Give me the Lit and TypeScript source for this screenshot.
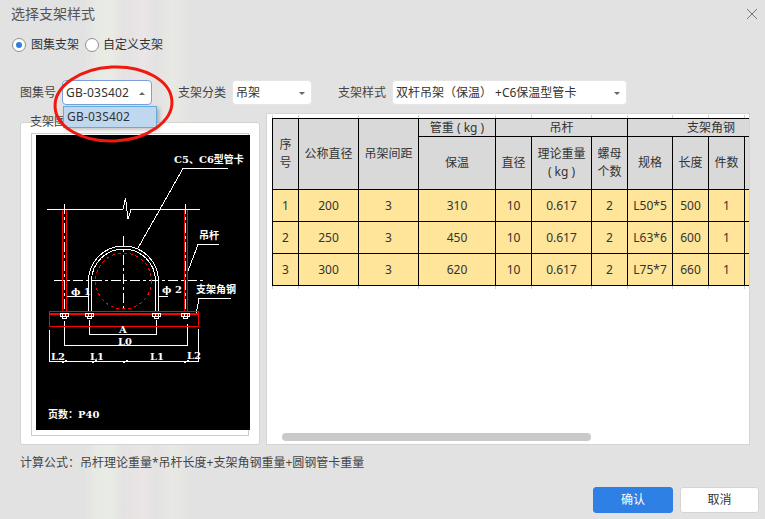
import { LitElement, css, html, svg } from 'lit';
import { customElement } from 'lit/decorators.js';

interface Row {
  no: number;
  dn: number;
  span: number;
  weight: number;
  rod: number;
  theory: string;
  nuts: number;
  spec: string;
  len: number;
  count: number;
}

const ROWS: Row[] = [
  { no: 1, dn: 200, span: 3, weight: 310, rod: 10, theory: '0.617', nuts: 2, spec: 'L50*5', len: 500, count: 1 },
  { no: 2, dn: 250, span: 3, weight: 450, rod: 10, theory: '0.617', nuts: 2, spec: 'L63*6', len: 600, count: 1 },
  { no: 3, dn: 300, span: 3, weight: 620, rod: 10, theory: '0.617', nuts: 2, spec: 'L75*7', len: 660, count: 1 },
];

const COLS = [26, 60, 60, 77, 36, 60, 36, 45, 36, 36, 50];

// bolts sit on the plate, x in page coordinates because the viewBox is aligned to the page
const bolt = (x: number) => svg`
  <path d="M${x - 4} 312.500h8v3h-8zM${x - 2} 315.500h4v2h-4zM${x - 1.5} 312.500v3M${x + 1.5} 312.500v3" fill="none" stroke="#fff" stroke-width="1" />
`;

@customElement('app-root')
export class AppRoot extends LitElement {
  static override styles = css`
    :host {
      display: flex;
      flex-direction: column;
      position: relative;
      width: 765px;
      height: 519px;
      overflow: hidden;
      box-sizing: border-box;
      padding: 0 6px 6px 20px;
      color: #333;
      font: 12px/1.3 'Noto Sans', 'Noto Sans CJK SC', sans-serif;
      background: linear-gradient(
        90deg,
        #e2e2e2 0,
        #e2e2e2 84px,
        #e8ebe5 98px,
        #e9ebe4 112px,
        #e4e2e2 124px,
        #ebe5e6 144px,
        #e3e2e2 156px,
        #e8e8e4 172px,
        #e2e2e2 192px
      );
    }
    .title {
      margin-left: -9px;
      height: 28px;
      display: flex;
      align-items: center;
      justify-content: space-between;
      font-size: 14px;
      color: #555;
      padding-right: 1px;
    }
    .close {
      width: 12px;
      height: 12px;
      display: block;
    }
    .radios {
      margin: 8px 0 0 -8px;
      height: 18px;
      display: flex;
      align-items: center;
    }
    .radio {
      display: flex;
      align-items: center;
      gap: 5px;
      margin-right: 6px;
    }
    .radio + .radio {
      gap: 4px;
    }
    .dot {
      width: 12px;
      height: 12px;
      border: 1px solid #8e8e8e;
      border-radius: 50%;
      background: #fff;
      display: flex;
      align-items: center;
      justify-content: center;
    }
    .dot.on i {
      width: 6px;
      height: 6px;
      border-radius: 50%;
      background: #2f7fe0;
    }
    .filters {
      margin-top: 26px;
      height: 25px;
      display: flex;
      align-items: center;
      position: relative;
    }
    .filters label {
      margin-right: 6px;
      color: #444;
    }
    .select {
      box-sizing: border-box;
      height: 25px;
      display: flex;
      align-items: center;
      justify-content: space-between;
      padding: 1px 6px 0 3px;
      background: #fff;
      border: 1px solid #e6e6e6;
      border-radius: 4px;
      white-space: nowrap;
    }
    .select.focus {
      border-color: #7b9fdc;
      padding-left: 3px;
      letter-spacing: 0.2px;
    }
    .arrow {
      width: 0;
      height: 0;
      border-left: 3px solid transparent;
      border-right: 3px solid transparent;
      border-top: 3px solid #666;
    }
    .arrow.up {
      border-top: 0;
      border-bottom: 3px solid #666;
    }
    .atlas {
      width: 90px;
      margin-right: 26px;
    }
    .kind {
      width: 80px;
      margin-right: 26px;
    }
    .style {
      width: 235px;
    }
    .plus {
      margin-left: 3px;
    }
    .menu {
      position: absolute;
      left: 43px;
      top: 26px;
      width: 94px;
      height: 22px;
      box-sizing: border-box;
      padding-left: 3px;
      display: flex;
      align-items: center;
      letter-spacing: 0.2px;
      background: #bfd8ef;
      border: 1px solid #62add9;
      box-shadow: 2px 2px 4px rgba(0, 0, 0, 0.25);
      z-index: 2;
    }
    .content {
      margin-top: 8px;
      display: flex;
      gap: 6px;
      height: 332px;
      padding-right: 9px;
    }
    .drawing {
      position: relative;
      box-sizing: border-box;
      margin-top: 9px;
      width: 240px;
      height: 323px;
      padding: 10px 10px 10px;
      background: #fff;
      border: 1px solid #d4d4d4;
      border-radius: 3px;
    }
    .legend {
      position: absolute;
      left: 9px;
      top: -9px;
      color: #444;
    }
    .frame {
      box-sizing: border-box;
      height: 303px;
      border: 1px solid #ccc;
      padding: 1px 0 5px 4px;
      background: #fff;
    }
    .frame svg {
      display: block;
      width: 214px;
      height: 295px;
      background: #000;
    }
    .frame text {
      fill: #fff;
      font: bold 10px 'DejaVu Serif', 'Noto Sans CJK SC', serif;
    }
    .grid {
      position: relative;
      flex: 1;
      overflow: hidden;
      background: #fff;
      border: 1px solid #d4d4d4;
      padding: 4px 0 0 5px;
      min-width: 0;
    }
    .ticks {
      display: flex;
      height: 0;
    }
    .ticks.top {
      margin-top: -3px;
      height: 3px;
    }
    .ticks.bottom {
      height: 3px;
    }
    .ticks span {
      flex: none;
      box-sizing: border-box;
      border-left: 1px solid #d0d0d0;
    }
    table {
      border-collapse: collapse;
      table-layout: fixed;
      width: 482px;
      color: #333;
    }
    th,
    td {
      border: 1px solid #000;
      padding: 0;
      text-align: center;
      font-weight: 400;
      line-height: 18px;
    }
    th {
      background: #d9d9d9;
    }
    tr.head1 th {
      height: 17px;
    }
    tr.head1 th.short {
      line-height: 16px;
    }
    tr.head2 th {
      height: 52px;
    }
    td {
      height: 31px;
      background: #fee599;
    }
    .scroll {
      position: absolute;
      left: 15px;
      bottom: 3px;
      width: 309px;
      height: 8px;
      border-radius: 4px;
      background: #c9c9c9;
    }
    .formula {
      margin-top: 10px;
      height: 17px;
      color: #444;
    }
    .actions {
      margin-top: auto;
      display: flex;
      justify-content: flex-end;
      gap: 7px;
    }
    .btn {
      box-sizing: border-box;
      width: 79px;
      height: 26px;
      display: flex;
      align-items: center;
      justify-content: center;
      border-radius: 3px;
      background: #fff;
      border: 1px solid #d4d4d4;
    }
    .btn.primary {
      width: 80px;
      background: #2f80e4;
      border-color: #2f80e4;
      color: #fff;
    }
    .ring {
      position: absolute;
      left: 0;
      top: 0;
      width: 765px;
      height: 519px;
      pointer-events: none;
      z-index: 3;
    }
  `;

  private drawing() {
    return html`<svg viewBox="35 134 214 295" shape-rendering="crispEdges">
      <g fill="none" stroke="#fff" stroke-width="1">
        <path d="M182 167.500H227M182 167.500L137 247" />
        <path d="M46 208.500H122L124.500 197L127 218L130 208.500H199" />
        <path d="M87.500 310V280A35 35 0 0 1 157.500 280V310M90.500 310V280A32 32 0 0 1 154.500 280V310" />
        <path d="M122.500 235V310M53 279.500H203M63.500 203V310M184.500 203V310" stroke-dasharray="10 3 3 3" />
        <path d="M197 243.500H218M197 243.500L187 270" />
        <path d="M65 295.500H88M157 295.500H167M198 297.500H230M198 297.500L195 313" />
        <path d="M88.500 319V333.500H155.500V319M63.500 320V344.500H186.500V323M48.500 329V360.500H198M197.500 328V360" />
        <path d="M61 362L66 359M91 362L96 359M122 362L127 359M183 362L188 359" />
      </g>
      <g fill="none" stroke="#ff0000" stroke-width="1">
        <path d="M61.500 209V310M65.500 209V310M183.500 209V310M186.500 209V310" />
        <path d="M48.500 310.500H197.500V325.500H48.500Z" />
        <path d="M48.500 313H197.500" stroke-width="2" />
        <circle cx="122.500" cy="280" r="28" stroke-dasharray="3 3" />
      </g>
      ${[63, 88.5, 155.5, 184.5].map((x) => bolt(x))}
      <text x="173" y="162">C5、C6型管卡</text>
      <text x="198" y="238">吊杆</text>
      <text x="70" y="294">ϕ 1</text>
      <text x="161" y="292">ϕ 2</text>
      <text x="195" y="292">支架角钢</text>
      <text x="118" y="332">A</text>
      <text x="117" y="344">L0</text>
      <text x="50" y="359">L2</text>
      <text x="89" y="359">L1</text>
      <text x="149" y="359">L1</text>
      <text x="186" y="358">L2</text>
      <text x="47" y="417">页数：P40</text>
    </svg>`;
  }

  private ticks(cls: string) {
    return html`<div class="ticks ${cls}">
      ${COLS.map((w) => html`<span style="width:${w}px"></span>`)}
    </div>`;
  }

  override render() {
    return html`
      <div class="title">
        <span>选择支架样式</span>
        <svg class="close" viewBox="0 0 12 12">
          <path d="M1 1L11 11M11 1L1 11" stroke="#777" fill="none" />
        </svg>
      </div>
      <div class="radios">
        <span class="radio"><span class="dot on"><i></i></span>图集支架</span>
        <span class="radio"><span class="dot"></span>自定义支架</span>
      </div>
      <div class="filters">
        <label>图集号</label>
        <div class="select focus atlas">GB-03S402<span class="arrow up"></span></div>
        <div class="menu">GB-03S402</div>
        <label>支架分类</label>
        <div class="select kind">吊架<span class="arrow"></span></div>
        <label>支架样式</label>
        <div class="select style">
          <span>双杆吊架（保温）<span class="plus">+C6保温型管卡</span></span><span class="arrow"></span>
        </div>
      </div>
      <div class="content">
        <div class="drawing">
          <span class="legend">支架图</span>
          <div class="frame">${this.drawing()}</div>
        </div>
        <div class="grid">
          ${this.ticks('top')}
          <table>
            <colgroup>${COLS.map((w) => html`<col style="width:${w}px" />`)}</colgroup>
            <thead>
              <tr class="head1">
                <th rowspan="2">序<br />号</th>
                <th rowspan="2">公称直径</th>
                <th rowspan="2">吊架间距</th>
                <th class="short">管重 ( kg )</th>
                <th class="short" colspan="3">吊杆</th>
                <th class="short" colspan="4">支架角钢</th>
              </tr>
              <tr class="head2">
                <th>保温</th>
                <th>直径</th>
                <th>理论重量<br />( kg )</th>
                <th>螺母<br />个数</th>
                <th>规格</th>
                <th>长度</th>
                <th>件数</th>
                <th></th>
              </tr>
            </thead>
            <tbody>
              ${ROWS.map(
                (r) => html`<tr>
                  <td>${r.no}</td>
                  <td>${r.dn}</td>
                  <td>${r.span}</td>
                  <td>${r.weight}</td>
                  <td>${r.rod}</td>
                  <td>${r.theory}</td>
                  <td>${r.nuts}</td>
                  <td>${r.spec}</td>
                  <td>${r.len}</td>
                  <td>${r.count}</td>
                  <td></td>
                </tr>`
              )}
            </tbody>
          </table>
          ${this.ticks('bottom')}
          <div class="scroll"></div>
        </div>
      </div>
      <div class="formula">计算公式：吊杆理论重量*吊杆长度+支架角钢重量+圆钢管卡重量</div>
      <div class="actions">
        <div class="btn primary">确认</div>
        <div class="btn">取消</div>
      </div>
      <svg class="ring" viewBox="0 0 765 519">
        <ellipse cx="113.500" cy="104" rx="58.500" ry="37" fill="none" stroke="#f0190f" stroke-width="3" transform="rotate(-3 113.500 104)" />
      </svg>
    `;
  }
}

declare global {
  interface HTMLElementTagNameMap {
    'app-root': AppRoot;
  }
}
